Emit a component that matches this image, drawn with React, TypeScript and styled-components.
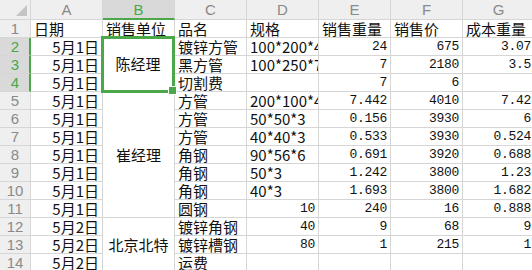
import React from 'react';
import styled, { createGlobalStyle } from 'styled-components';

const GlobalStyle = createGlobalStyle`
  html, body {
    margin: 0;
    padding: 0;
    background: #fff;
  }
  * {
    box-sizing: border-box;
  }
`;

const GREEN = '#4aa74a';
const LINE = '#d6d6d6';

const Sheet = styled.div`
  display: grid;
  grid-template-columns: 31px repeat(7, 72px);
  grid-template-rows: 20px repeat(14, 18px);
  width: 532px;
  height: 270px;
  overflow: hidden;
  font-family: 'Noto Sans CJK SC', 'Noto Sans', sans-serif;
  font-size: 15px;
  color: #111;
`;

const Corner = styled.div`
  position: relative;
  background: #efefef;
  border-right: 1px solid ${LINE};
  border-bottom: 1px solid ${LINE};

  &::after {
    content: '';
    position: absolute;
    right: 3px;
    bottom: 3px;
    width: 0;
    height: 0;
    border-left: 11px solid transparent;
    border-bottom: 11px solid #c4c4c4;
  }
`;

const ColHead = styled.div<{ $active?: boolean }>`
  display: flex;
  align-items: center;
  justify-content: center;
  background: ${(p) => (p.$active ? '#d9d9d9' : '#efefef')};
  color: ${(p) => (p.$active ? GREEN : '#8a8a8a')};
  border-right: 1px solid ${LINE};
  border-bottom: ${(p) => (p.$active ? `2px solid ${GREEN}` : `1px solid ${LINE}`)};
  font-family: 'Liberation Sans', 'Noto Sans', sans-serif;
  font-size: 15px;
  padding-top: ${(p) => (p.$active ? '1px' : '0')};
`;

const RowHead = styled.div<{ $active?: boolean }>`
  display: flex;
  align-items: center;
  justify-content: center;
  background: ${(p) => (p.$active ? '#d9d9d9' : '#efefef')};
  color: ${(p) => (p.$active ? GREEN : '#8a8a8a')};
  border-right: ${(p) => (p.$active ? `2px solid ${GREEN}` : `1px solid ${LINE}`)};
  border-bottom: 1px solid ${LINE};
  font-family: 'Liberation Sans', 'Noto Sans', sans-serif;
  font-size: 15px;
  padding-left: ${(p) => (p.$active ? '1px' : '0')};
`;

const Cell = styled.div<{ $right?: boolean; $mono?: boolean; $span?: number; $center?: boolean }>`
  display: flex;
  align-items: ${(p) => (p.$center ? 'center' : 'flex-end')};
  justify-content: ${(p) => (p.$center ? 'center' : p.$right ? 'flex-end' : 'flex-start')};
  grid-row: ${(p) => (p.$span ? `span ${p.$span}` : 'auto')};
  padding: 0 3px;
  border-right: 1px solid ${LINE};
  border-bottom: 1px solid ${LINE};
  overflow: hidden;
  white-space: nowrap;
  line-height: 17px;
  font-family: ${(p) => (p.$mono ? "'Liberation Mono', monospace" : "'Noto Sans CJK SC', 'Noto Sans', sans-serif")};
  font-size: ${(p) => (p.$mono ? '13px' : '15px')};
  letter-spacing: ${(p) => (p.$mono ? '-0.3px' : '0')};
`;

const SelectedCell = styled(Cell)`
  position: relative;
  overflow: visible;
  border: 3px solid ${GREEN};
  margin: -2px 0 -1px -2px;
  padding-bottom: 2px;

  &::after {
    content: '';
    position: absolute;
    right: -5px;
    bottom: -5px;
    width: 7px;
    height: 7px;
    background: ${GREEN};
    border: 1px solid #fff;
  }
`;

type Row = {
  a: string;
  b?: { text: string; span: number; selected?: boolean };
  c: string;
  d: string;
  dNum?: boolean;
  e: string;
  f: string;
  g: string;
};

const rows: Row[] = [
  { a: '5月1日', b: { text: '陈经理', span: 3, selected: true }, c: '镀锌方管', d: '100*200*4', e: '24', f: '675', g: '3.07' },
  { a: '5月1日', c: '黑方管', d: '100*250*7', e: '7', f: '2180', g: '3.5' },
  { a: '5月1日', c: '切割费', d: '', e: '7', f: '6', g: '' },
  { a: '5月1日', b: { text: '崔经理', span: 7 }, c: '方管', d: '200*100*4', e: '7.442', f: '4010', g: '7.42' },
  { a: '5月1日', c: '方管', d: '50*50*3', e: '0.156', f: '3930', g: '6' },
  { a: '5月1日', c: '方管', d: '40*40*3', e: '0.533', f: '3930', g: '0.524' },
  { a: '5月1日', c: '角钢', d: '90*56*6', e: '0.691', f: '3920', g: '0.688' },
  { a: '5月1日', c: '角钢', d: '50*3', e: '1.242', f: '3800', g: '1.23' },
  { a: '5月1日', c: '角钢', d: '40*3', e: '1.693', f: '3800', g: '1.682' },
  { a: '5月1日', c: '圆钢', d: '10', dNum: true, e: '240', f: '16', g: '0.888' },
  { a: '5月2日', b: { text: '北京北特', span: 3 }, c: '镀锌角钢', d: '40', dNum: true, e: '9', f: '68', g: '9' },
  { a: '5月2日', c: '镀锌槽钢', d: '80', dNum: true, e: '1', f: '215', g: '1' },
  { a: '5月2日', c: '运费', d: '', e: '', f: '', g: '' },
];

const header = ['日期', '销售单位', '品名', '规格', '销售重量', '销售价', '成本重量'];
const letters = ['A', 'B', 'C', 'D', 'E', 'F', 'G'];

export default function App() {
  return (
    <>
      <GlobalStyle />
      <Sheet>
        <Corner />
        {letters.map((l) => (
          <ColHead key={l} $active={l === 'B'}>
            {l}
          </ColHead>
        ))}

        <RowHead>1</RowHead>
        {header.map((h) => (
          <Cell key={h}>{h}</Cell>
        ))}

        {rows.map((r, i) => {
          const n = i + 2;
          return (
            <React.Fragment key={n}>
              <RowHead $active={n >= 2 && n <= 4}>{n}</RowHead>
              <Cell $right>{r.a}</Cell>
              {r.b &&
                (r.b.selected ? (
                  <SelectedCell $span={r.b.span} $center>
                    {r.b.text}
                  </SelectedCell>
                ) : (
                  <Cell $span={r.b.span} $center>
                    {r.b.text}
                  </Cell>
                ))}
              <Cell>{r.c}</Cell>
              <Cell $right={r.dNum} $mono={r.dNum}>
                {r.d}
              </Cell>
              <Cell $right $mono>
                {r.e}
              </Cell>
              <Cell $right $mono>
                {r.f}
              </Cell>
              <Cell $right $mono>
                {r.g}
              </Cell>
            </React.Fragment>
          );
        })}
      </Sheet>
    </>
  );
}
